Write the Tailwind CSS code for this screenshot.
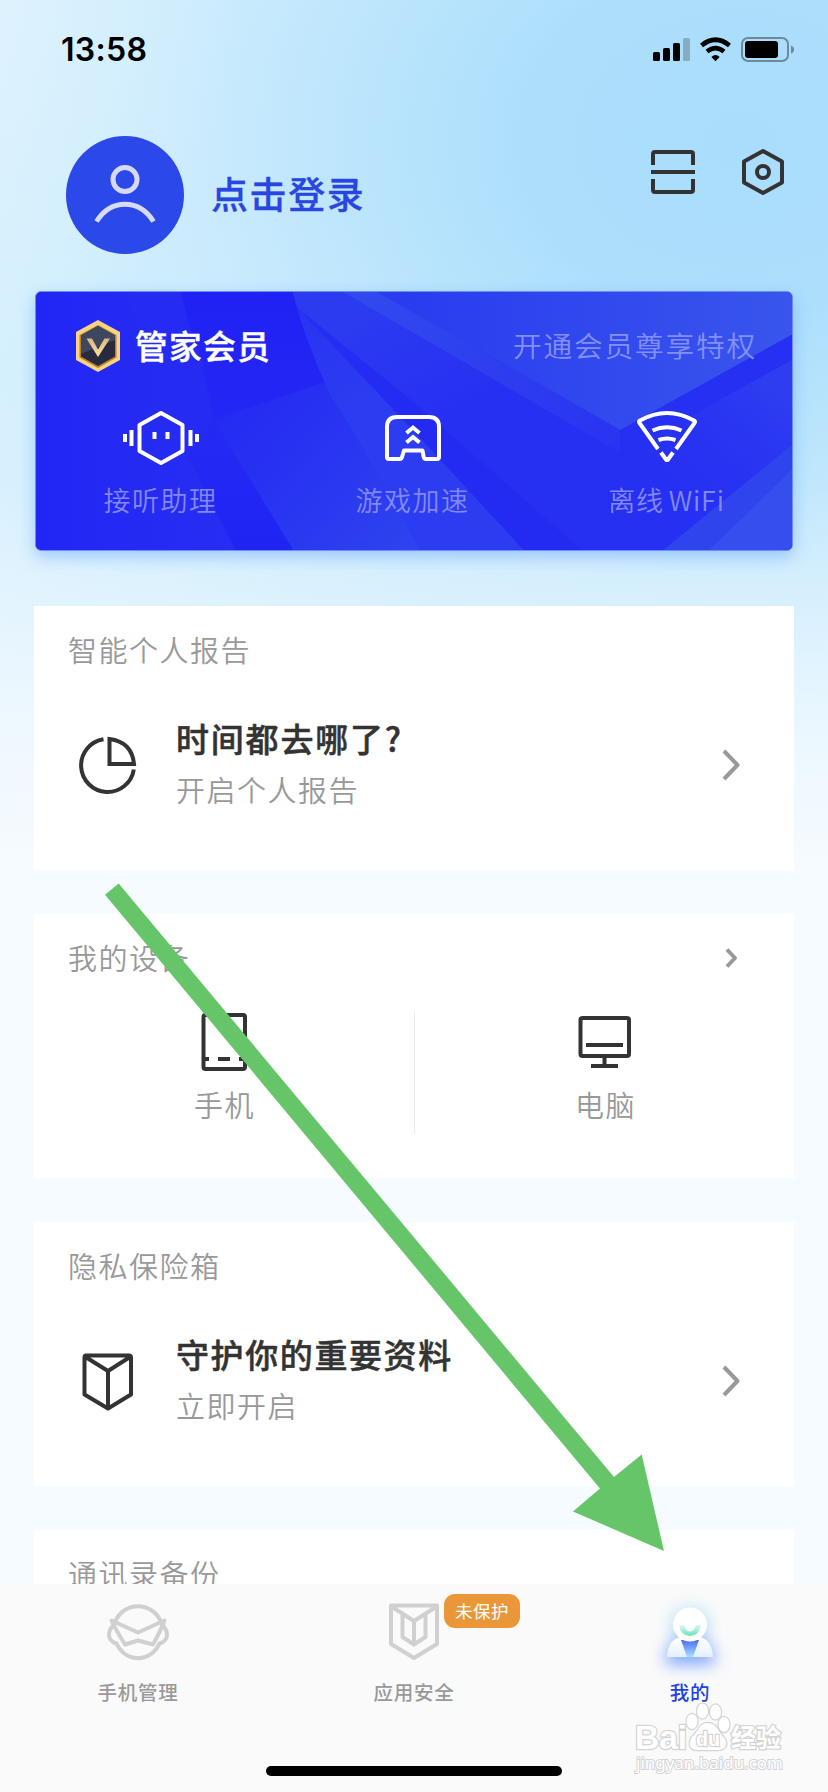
<!DOCTYPE html>
<html lang="zh-CN">
<head>
<meta charset="utf-8">
<title>我的</title>
<script src="https://cdn.jsdelivr.net/npm/@tailwindcss/browser@4"></script>
</head>
<body class="bg-[#f6fbff]">
<div class="relative flex h-[1792px] w-[828px] flex-col overflow-hidden bg-[linear-gradient(180deg,rgba(246,251,255,0)_480px,rgba(246,251,255,.25)_600px,rgba(246,251,255,.7)_740px,#f6fbff_880px),radial-gradient(300px_420px_at_-60px_-20px,rgba(240,248,255,.45),rgba(240,248,255,0)),radial-gradient(1000px_800px_at_740px_140px,#aaddfc_0%,#addffc_22%,#b9e4fc_36%,#cbebfd_55%,#d3effd_75%,#dff2fe_100%)] font-['Noto_Sans_CJK_SC',sans-serif] text-[#999]">

  <!-- status bar -->
  <header class="flex h-[99px] shrink-0 items-center justify-between pt-px pr-[32px] pl-[61px]">
    <span class="font-['Inter',sans-serif] text-[32px] leading-10 font-semibold tracking-[.3px] text-black">13:58</span>
    <svg class="h-[26px] w-[144px]" viewBox="652 37 144 26">
      <rect x="653" y="52" width="7" height="9" rx="1.5"/><rect x="663" y="48" width="7" height="13" rx="1.5"/><rect x="673" y="43" width="7" height="18" rx="1.5"/><rect x="683" y="38" width="7" height="23" rx="1.5" fill-opacity=".22"/>
      <g fill="none" stroke="#000" stroke-width="4.6"><path d="M701.500 45.500Q715.500 34 729.500 45.500"/><path d="M707 51.500Q715.500 44.800 724 51.500"/></g>
      <path d="M711.300 57Q715.500 53 719.700 57L715.500 61.200Z"/>
      <rect x="742" y="38" width="46" height="23" rx="6" fill="none" stroke="#6d8a9b" stroke-width="2"/><rect x="745" y="41" width="33" height="17" rx="3"/><path d="M791 45.500Q794 46.500 794 49.500T791 53.500Z" fill="#6d8a9b"/>
    </svg>
  </header>

  <!-- profile row -->
  <section class="flex h-[192px] shrink-0 items-start pt-[37px] pr-[42px] pl-[66px]">
    <svg class="size-[118px] shrink-0" viewBox="66 136 118 118"><circle cx="125" cy="195" r="59" fill="#2a49e8"/><g fill="none" stroke="#d6daf8" stroke-width="5"><circle cx="125" cy="179.500" r="12"/><path d="M96.500 221.500C111 198.500 139 198.500 153.500 221.500"/></g></svg>
    <span class="mt-[33px] ml-[27px] text-[37px] leading-[48px] font-medium tracking-[1.6px] text-[#2a46e0] [-webkit-text-stroke:.3px]">点击登录</span>
    <div class="mt-[10px] ml-auto flex gap-[43px]">
      <svg class="h-[52px] w-[48px]" viewBox="648 146 48 52" fill="none" stroke="#333" stroke-width="4"><path d="M652 165V154q0-2 2-2h36q2 0 2 2v11M652 179v11q0 2 2 2h36q2 0 2-2V179M650 172h44"/></svg>
      <svg class="h-[52px] w-[46px]" viewBox="739 146 46 52" fill="none" stroke="#333" stroke-width="4"><path stroke-linejoin="round" d="M762 151L781 161.500V182.500L762 193L743 182.500V161.500Z"/><circle cx="762" cy="172" r="6"/></svg>
    </div>
  </section>

  <!-- membership card -->
  <section class="relative mx-[35px] h-[260px] shrink-0 overflow-hidden rounded-[6px] border border-[#6f8cf6] shadow-[0_6px_16px_rgba(70,140,250,.4)]">
    <svg class="absolute inset-0 size-full" viewBox="35 291 758 260" preserveAspectRatio="none">
      <defs>
        <linearGradient id="left" x1="0" x2="1" y1="0" y2="0"><stop offset="0" stop-color="#2226f4"/><stop offset="1" stop-color="#272ef2"/></linearGradient>
        <linearGradient id="fold" x1="0" x2="0" y1="0" y2="1"><stop offset="0" stop-color="#2021f4"/><stop offset=".6" stop-color="#2429f3"/><stop offset="1" stop-color="#2024f3"/></linearGradient>
        <linearGradient id="mid" gradientUnits="userSpaceOnUse" x1="215" y1="400" x2="390" y2="560"><stop offset="0" stop-color="#2429f3"/><stop offset=".5" stop-color="#2835f1"/><stop offset="1" stop-color="#2e42ef"/></linearGradient>
        <linearGradient id="ray" gradientUnits="userSpaceOnUse" x1="292" y1="300" x2="340" y2="410"><stop offset="0" stop-color="#2833f1"/><stop offset="1" stop-color="#2c3cf0"/></linearGradient>
        <linearGradient id="deep" gradientUnits="userSpaceOnUse" x1="380" y1="310" x2="440" y2="420"><stop offset="0" stop-color="#2b3bf0"/><stop offset="1" stop-color="#2630f2"/></linearGradient>
        <linearGradient id="top" x1="0" x2="1"><stop offset="0" stop-color="#2a3af0"/><stop offset="1" stop-color="#3855ec"/></linearGradient>
        <linearGradient id="strip" gradientUnits="userSpaceOnUse" x1="360" y1="300" x2="621" y2="442"><stop offset="0" stop-color="#3249ee"/><stop offset="1" stop-color="#2834f1"/></linearGradient>
        <linearGradient id="low" gradientUnits="userSpaceOnUse" x1="760" y1="380" x2="650" y2="500"><stop offset="0" stop-color="#2d3df0"/><stop offset="1" stop-color="#2630f2" stop-opacity="0"/></linearGradient>
      </defs>
      <path d="M35 291H793V551H35Z" fill="url(#fold)"/>
      <path d="M35 291H123L187 457L235 551H35Z" fill="url(#left)"/>
      <path d="M123 291H181Q186 325 202 360L213 420L187 457Z" fill="#252bf3"/>
      <path d="M213 420L293 551H524L422 440L330 380Z" fill="url(#mid)"/>
      <path d="M292 291H400L621 453L793 359V551H524L298 308Z" fill="url(#deep)"/>
      <path d="M292 291L298 308L422 440L524 551H420Q360 440 330 395Q305 340 292 291Z" fill="url(#ray)"/>
      <path d="M298 308L414 402L582 551H524L422 440Z" fill="#2329f3" fill-opacity=".75"/>
      <path d="M343 291H377L621 430V453Z" fill="url(#strip)"/>
      <path d="M377 291H793V334L621 430Z" fill="url(#top)"/>
      <path d="M621 455L793 359V445L664 551H582Z" fill="url(#low)"/>
      <path d="M621 430L793 334V359L621 455Z" fill="#2530f2"/>
      <path d="M793 445L664 551H793Z" fill="#3044ee"/>
      <path d="M793 470L710 551H793Z" fill="#354eed"/>
    </svg>
    <div class="relative flex h-full flex-col">
      <div class="mt-[28px] flex h-[52px] items-center pr-[35px] pl-[39px]">
        <svg class="h-[52px] w-[46px] shrink-0" viewBox="75 320 46 52">
          <defs><linearGradient id="gold" x1="0" y1="0" x2="1" y2="1"><stop offset="0" stop-color="#ffe9b0"/><stop offset=".5" stop-color="#d8a03c"/><stop offset="1" stop-color="#ffe39a"/></linearGradient><linearGradient id="vee" x1="0" y1="0" x2="0" y2="1"><stop offset="0" stop-color="#d8b880"/><stop offset="1" stop-color="#ffe29a"/></linearGradient></defs>
          <path d="M98 320L120 332V360L98 372L76 360V332Z" fill="#f7d383"/><path d="M98 325L116.500 335V357.500L98 368L79.500 357.500V335Z" fill="#b98228"/><path d="M98 326L115 335.500V356.500L98 366L81 356.500V335.500Z" fill="#29293f"/><path d="M98 326L115 335.500V340L81 354V335.500Z" fill="#3d475f"/><path d="M86.500 338.500H92L98 349.500L104.500 338.500H110L98 357Z" fill="url(#vee)"/>
        </svg>
        <span class="-mt-[2px] ml-[14px] text-[32.500px] leading-[48px] font-medium tracking-[1.6px] text-white [-webkit-text-stroke:.5px]">管家会员</span>
        <span class="-mt-[2px] ml-auto text-[28.700px] leading-[44px] font-[350] tracking-[1.8px] text-[#8290f4]">开通会员尊享特权</span>
      </div>
      <div class="mt-[36px] flex pr-px text-[27px] leading-[40px] font-[350] text-[#8288f5]">
        <div class="flex w-[249px] flex-col items-center gap-[12px]">
          <svg class="h-[60px] w-[80px]" viewBox="120 408 80 60" fill="none" stroke="#fff" stroke-width="4"><path stroke-linejoin="round" d="M160 413L181.500 425V451L160 463L138.500 451V425Z"/><path d="M124 434v8M130.500 430v16M189.500 430v16M196 434v8M153.500 432v7M166.500 432v7"/></svg>
          <span class="tracking-[1.500px]">接听助理</span>
        </div>
        <div class="flex w-[255px] flex-col items-center gap-[12px]">
          <svg class="h-[60px] w-[60px]" viewBox="382 408 60 60" fill="none" stroke="#fff" stroke-width="4"><path stroke-linejoin="round" d="M396 417H428Q438 417 438 427V457Q438 459 436 459H425Q423 459 422.700 457L421.500 450.500H403L401 457Q400.500 459 398.500 459H388Q386 459 386 457V427Q386 417 396 417Z"/><path d="M405.500 433L412 427.500L418.500 433M405.500 442.500L412 437L418.500 442.500"/></svg>
          <span class="tracking-[1.500px]">游戏加速</span>
        </div>
        <div class="flex flex-1 flex-col items-center gap-[12px] pl-[2px]">
          <svg class="h-[60px] w-[64px]" viewBox="634 408 64 60" fill="none" stroke="#fff" stroke-width="4"><path stroke-linejoin="round" d="M657 449L638.500 423Q637.500 421.500 639 420.500Q666 405.500 693 420.500Q694.500 421.500 693.500 423L675 449"/><path stroke-linejoin="round" d="M660 452.500L665 459.500Q666 460.500 667 459.500L672 452.500"/><path d="M651.500 430.500Q666 424 680.500 430.500M657.500 440Q666 437 674.500 440"/></svg>
          <span class="tracking-[.8px] [word-spacing:-2px]">离线 WiFi</span>
        </div>
      </div>
    </div>
  </section>

  <!-- list cards -->
  <main class="mt-[55px] flex shrink-0 flex-col gap-[44px] px-[34px] text-[29px] leading-[44px] font-[350] tracking-[1.500px]">
    <section class="h-[264px] bg-white">
      <h2 class="pt-[21px] pl-[34px]">智能个人报告</h2>
      <div class="mt-[42px] flex items-center pr-[51px] pl-[43px]">
        <svg class="mt-[5px] h-[62px] w-[62px]" viewBox="77 734 62 62" fill="none" stroke="#333" stroke-width="4"><path d="M103.500 739.300A26.500 26.500 0 1 0 133.800 769.500"/><path d="M109.500 739V764H134Q132 742 109.500 739Z"/></svg>
        <div class="ml-[37px] flex flex-col gap-[4px]">
          <span class="text-[33px] leading-[50px] font-medium tracking-[1.800px] text-[#333] [-webkit-text-stroke:.5px]">时间都去哪了?</span>
          <span>开启个人报告</span>
        </div>
        <svg class="mt-[6px] ml-auto h-[34px] w-[24px]" viewBox="718 749 24 34" fill="none" stroke="#999" stroke-width="4"><path stroke-linejoin="round" d="M723 752L736.500 766L723 780"/></svg>
      </div>
    </section>

    <section class="h-[264px] bg-white">
      <div class="flex items-center justify-between pt-[21px] pr-[55px] pl-[34px]">
        <h2>我的设备</h2>
        <svg class="mt-px h-[24px] w-[16px]" viewBox="722 946 16 24" fill="none" stroke="#999" stroke-width="4"><path stroke-linejoin="round" d="M726 949.500L734 958L726 966.500"/></svg>
      </div>
      <div class="mt-[29px] flex h-[130px]">
        <div class="flex w-[380px] flex-col items-center">
          <svg class="mt-[3px] h-[62px] w-[50px]" viewBox="199 1011 50 62" fill="none" stroke="#333" stroke-width="4"><rect x="203.500" y="1015" width="41.500" height="54" rx="2"/><path d="M204 1059h5M218 1059h12M239 1059h6"/></svg>
          <span class="mt-[9px] pl-[1px]">手机</span>
        </div>
        <div class="mt-[4px] h-[122px] w-px bg-[#e9e9e9]"></div>
        <div class="flex flex-1 flex-col items-center">
          <svg class="mt-[3px] h-[62px] w-[60px]" viewBox="574 1011 60 62" fill="none" stroke="#333" stroke-width="4"><rect x="579.500" y="1018" width="48.500" height="38" rx="2"/><path d="M585 1045h37M603.500 1057v8M590 1066h27"/></svg>
          <span class="mt-[9px] pl-[2px]">电脑</span>
        </div>
      </div>
    </section>

    <section class="h-[264px] bg-white">
      <h2 class="pt-[21px] pl-[34px]">隐私保险箱</h2>
      <div class="mt-[42px] flex items-center pr-[51px] pl-[43px]">
        <svg class="mt-[5px] h-[62px] w-[62px]" viewBox="77 1350 62 62" fill="none" stroke="#333" stroke-width="4" stroke-linejoin="round"><path d="M86 1355.500H129Q131 1355.500 131 1357.500V1394.500L108 1408.500L84.500 1394.500V1357.500Q84.500 1355.500 86 1355.500ZM85.500 1357L108 1371L130 1357M108 1371V1408"/></svg>
        <div class="ml-[37px] flex flex-col gap-[4px]">
          <span class="text-[33px] leading-[50px] font-medium tracking-[1.600px] text-[#333] [-webkit-text-stroke:.5px]">守护你的重要资料</span>
          <span>立即开启</span>
        </div>
        <svg class="mt-[6px] ml-auto h-[34px] w-[24px]" viewBox="718 749 24 34" fill="none" stroke="#999" stroke-width="4"><path stroke-linejoin="round" d="M723 752L736.500 766L723 780"/></svg>
      </div>
    </section>

    <section class="h-[54px] overflow-hidden bg-white">
      <h2 class="pt-[21px] pl-[34px]">通讯录备份</h2>
    </section>
  </main>

  <!-- tab bar -->
  <nav class="flex h-[208px] shrink-0 flex-col items-center bg-[#fafafa]">
    <div class="grid w-full grid-cols-3 pt-[14px] text-[19.500px] leading-[30px] font-medium tracking-[.8px]">
      <div class="flex flex-col items-center">
        <svg class="h-[68px] w-[68px]" viewBox="104 1598 68 68" fill="none" stroke="#d0d0d0" stroke-width="4" stroke-linejoin="round" stroke-linecap="round"><path d="M115.500 1621A24.500 24.500 0 0 1 160.500 1621M114 1625.500Q109 1628.500 109 1635Q109 1641 116.500 1643.500C126 1663 150 1663 159.500 1643.500Q167 1641 167 1635Q167 1628.500 162 1625.500"/><path d="M111.500 1620.500L138 1632.500L164.500 1620.500Q161 1630 153 1644.500L138 1640.500L125 1644.500Q116 1630 111.500 1620.500Z"/></svg>
        <span class="mt-[11px]">手机管理</span>
      </div>
      <div class="relative flex flex-col items-center">
        <svg class="h-[68px] w-[60px]" viewBox="384 1598 60 68" fill="none" stroke="#d0d0d0" stroke-width="4" stroke-linejoin="round"><path d="M391 1605.500H437V1644L414 1658L391 1644ZM392 1607L414 1621L436 1607"/><path d="M402.500 1614V1637L414 1644.500L425.500 1637V1614M414 1621V1644"/></svg>
        <span class="mt-[11px]">应用安全</span>
        <span class="absolute -top-[4px] left-[168px] flex h-[34px] w-[76px] items-center justify-center rounded-[11px] bg-[#ea973a] pb-px text-[17.500px] font-normal tracking-[.5px] text-white">未保护</span>
      </div>
      <div class="flex flex-col items-center text-[#2340e6]">
        <svg class="h-[68px] w-[80px] overflow-visible" viewBox="650 1598 80 68">
          <defs>
            <filter id="glow" x="-80%" y="-80%" width="260%" height="260%"><feGaussianBlur stdDeviation="8"/></filter>
            <linearGradient id="halo" x1="0" y1="0" x2="0" y2="1"><stop offset="0" stop-color="#c5f3f5" stop-opacity=".8"/><stop offset="1" stop-color="#6f98fb"/></linearGradient>
            <linearGradient id="smile" x1="0" y1="0" x2="0" y2="1"><stop offset="0" stop-color="#dcfaf1"/><stop offset="1" stop-color="#63e3bd"/></linearGradient>
            <linearGradient id="tie" x1="0" y1="0" x2="0" y2="1"><stop offset="0" stop-color="#4a6cf2"/><stop offset="1" stop-color="#a5e2fb"/></linearGradient>
            <linearGradient id="body" x1="0" y1="0" x2="0" y2="1"><stop offset="0" stop-color="#fff"/><stop offset="1" stop-color="#e4f0ff"/></linearGradient>
          </defs>
          <path d="M690 1605a18 18 0 0 1 13 31Q714 1644 715 1664H665Q666 1644 677 1636A18 18 0 0 1 690 1605Z" fill="url(#halo)" filter="url(#glow)"/>
          <path d="M667 1657Q668 1639 681 1637H699Q712 1639 713 1657Z" fill="url(#body)"/>
          <path d="M681 1640H699L693 1657H687Z" fill="url(#tie)"/>
          <circle cx="690" cy="1624.500" r="17" fill="#fff"/>
          <path d="M679 1625H684Q686 1631.500 690 1631.500T696 1625H701Q699 1636 690 1636T679 1625Z" fill="url(#smile)"/>
        </svg>
        <span class="mt-[11px]">我的</span>
      </div>
    </div>
    <div class="mt-auto mb-[16px] h-[10px] w-[296px] rounded-full bg-black"></div>
  </nav>

  <!-- watermark -->
  <svg class="absolute top-[1696px] left-[631px] h-[84px] w-[160px]" viewBox="630 1696 160 84" fill="#fff" stroke="#d4d4d4" paint-order="stroke">
    <text x="634" y="1749" font-family="'Liberation Sans',sans-serif" font-weight="bold" font-size="34" textLength="52" lengthAdjust="spacingAndGlyphs" stroke-width="2.500">Bai</text>
    <g stroke-width="2.400"><ellipse cx="691" cy="1721.500" rx="5.500" ry="7.500"/><ellipse cx="701.500" cy="1711" rx="5.500" ry="7.500"/><ellipse cx="714.500" cy="1712" rx="5.500" ry="7.500"/><ellipse cx="723" cy="1724.500" rx="5.500" ry="7.500"/>
    <path d="M707 1723C716 1723 717 1732 724 1739C728 1746 722 1751 715 1750H698C690 1751 686 1745 691 1737C698 1731 698 1723 707 1723Z"/></g>
    <text x="695" y="1746" font-family="'Liberation Sans',sans-serif" font-weight="bold" font-size="20" textLength="24" lengthAdjust="spacingAndGlyphs" stroke-width="2.400">du</text>
    <text x="730" y="1747" font-family="'Noto Sans CJK SC',sans-serif" font-weight="bold" font-size="25" stroke-width="2.500">经验</text>
    <text x="635" y="1769" font-family="'Noto Sans',sans-serif" font-size="17" textLength="147" lengthAdjust="spacingAndGlyphs" stroke-width="2">jingyan.baidu.com</text>
  </svg>

  <!-- pointer arrow -->
  <svg class="pointer-events-none absolute top-[880px] left-[100px] h-[680px] w-[570px]" viewBox="100 880 570 680"><path d="M118.700 883.500L614 1477L641.700 1454.500L664 1551L573 1511.500L600 1488.500L105 894.700Z" fill="#66c568"/></svg>
</div>
</body>
</html>
